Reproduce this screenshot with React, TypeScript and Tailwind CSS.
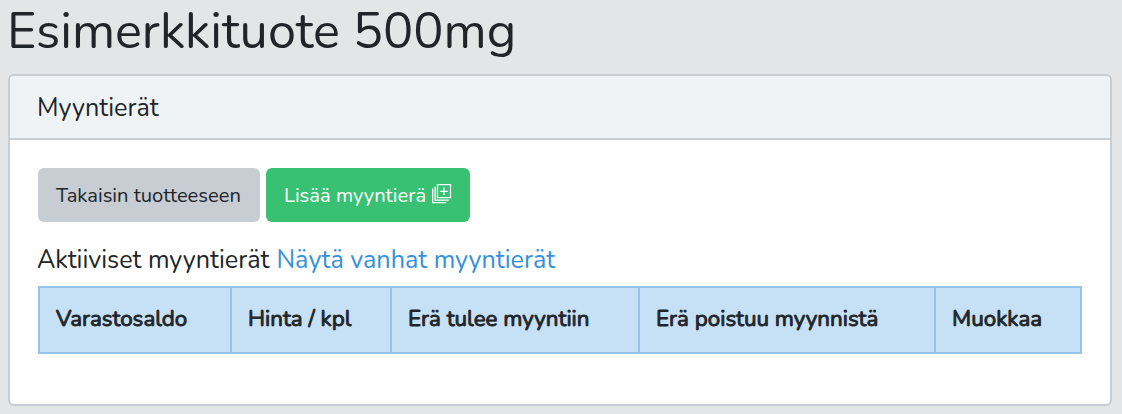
const columns = [
  { label: "Varastosaldo", width: "w-[192px]" },
  { label: "Hinta / kpl", width: "w-[160px]" },
  { label: "Erä tulee myyntiin", width: "w-[248px]" },
  { label: "Erä poistuu myynnistä", width: "w-[296px]" },
  { label: "Muokkaa", width: "w-[146px]" },
];

function AddBatchIcon() {
  return (
    <svg className="h-5 w-5 shrink-0" viewBox="0 0 20 20" fill="none" stroke="currentColor" strokeWidth="1.3">
      <path d="M5.5.7h13v13h-13z" />
      <path d="M3.1 2.8v13.4h13.6" />
      <path d="M.7 4.5v14.2h13.5" />
      <path d="M12 3.5v7.6M8.2 7.3h7.6" />
    </svg>
  );
}

export default function App() {
  return (
    <div className="h-[414px] w-[1122px] bg-[#e4e5e7] px-2 font-['Nunito',Lato,sans-serif] whitespace-nowrap text-[#212529]">
      <h1 className="-ml-px h-[74px] pt-0.5 text-[50.4px] leading-[60px]">
        Esimerkkituote 500mg
      </h1>

      <div className="h-[332px] w-[1104px] rounded-md border-2 border-[#c8ccd3] bg-white">
        <div className="flex h-16 items-center rounded-t border-b-2 border-[#c8ccd3] bg-[#eff3f6] px-[27px] pt-[3px] text-[25.2px]">
          Myyntierät
        </div>

        <div className="px-7 pt-7">
          {/* Actions */}
          <div className="flex gap-1.5">
            <button className="h-[54px] w-[222px] rounded-md bg-[#c8ccd3] pt-0.5 pr-px text-[20.16px]">
              Takaisin tuotteeseen
            </button>
            <button className="flex h-[54px] w-[204px] items-center rounded-md bg-[#38c172] pl-[18px] text-[20.16px] text-white">
              <span className="w-[148px] pt-0.5 text-left">Lisää myyntierä</span>
              <span className="-mt-0.5">
                <AddBatchIcon />
              </span>
            </button>
          </div>

          <div className="mt-[22px] -ml-px flex h-8 items-center gap-[7px] pt-0.5 text-[25.2px]">
            <span>Aktiiviset myyntierät</span>
            <a href="#" className="text-[#3490dc]">
              Näytä vanhat myyntierät
            </a>
          </div>

          {/* Batches */}
          <table className="mt-[10px] h-[68px] w-[1044px] table-fixed border-separate border-spacing-0 border-l-2 border-[#95c5ed] bg-[#c6e0f5] text-[22.4px]">
            <thead>
              <tr>
                {columns.map((column) => (
                  <th
                    key={column.label}
                    className={`${column.width} border-y-2 border-r-2 border-[#95c5ed] pb-0.5 pl-4 text-left font-normal [-webkit-text-stroke:0.9px_#212529]`}
                  >
                    {column.label}
                  </th>
                ))}
              </tr>
            </thead>
          </table>
        </div>
      </div>
    </div>
  );
}
